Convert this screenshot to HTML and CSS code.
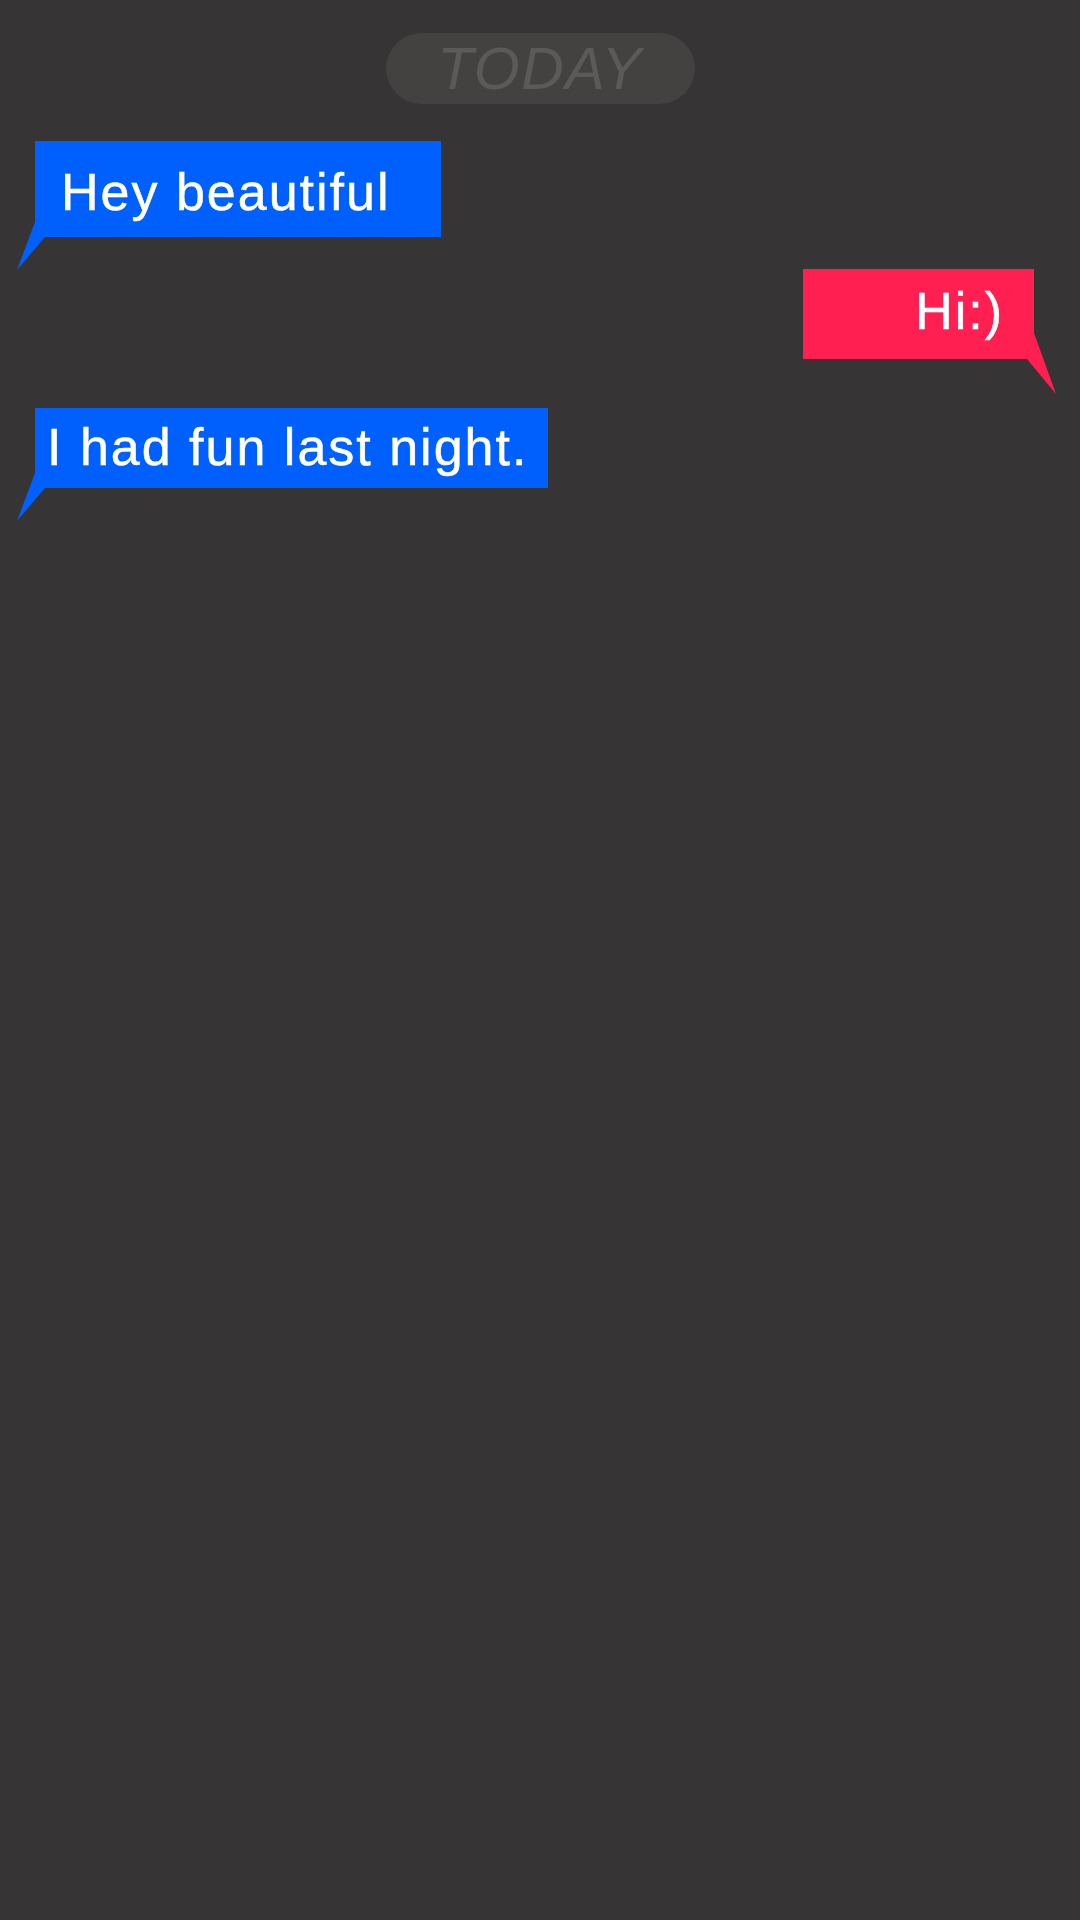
FILE: index.html
```html
<!DOCTYPE html>
<html lang="en">
<head>
<meta charset="utf-8">
<title>Chat</title>
<link rel="stylesheet" href="styles.css">
</head>
<body>
<main class="chat">
  <div class="day-pill">TODAY</div>
  <div class="messages">
    <div class="bubble incoming first">Hey beautiful</div>
    <div class="bubble outgoing second">Hi:)</div>
    <div class="bubble incoming third">I had fun last night.</div>
  </div>
</main>
</body>
</html>
```
FILE: styles.css
```css
html, body {
  margin: 0;
  padding: 0;
  background: #363435;
  height: 100%;
}
body {
  font-family: "Liberation Sans", Arial, Helvetica, sans-serif;
}
.chat {
  padding-top: 33px;
  min-height: 1920px;
  box-sizing: border-box;
}
.day-pill {
  width: 309px;
  height: 71px;
  margin: 0 auto;
  border-radius: 36px;
  background: #434241;
  color: #5b5a59;
  font-style: italic;
  font-size: 59px;
  line-height: 72px;
  letter-spacing: 1.5px;
  text-indent: 0;
  text-align: center;
}
.messages {
  display: flex;
  flex-direction: column;
  padding: 0 46px 0 35px;
}
.bubble {
  position: relative;
  box-sizing: border-box;
  color: #ffffff;
  font-size: 52px;
  line-height: 52px;
  letter-spacing: 2px;
  -webkit-text-stroke: 0.5px #ffffff;
  white-space: nowrap;
}
.bubble::before {
  content: "";
  position: absolute;
  background: inherit;
}
.incoming {
  align-self: flex-start;
  background: #0060fe;
}
.incoming::before {
  left: -18px;
  bottom: -33px;
  width: 28px;
  height: 48px;
  clip-path: polygon(18px 0, 0 48px, 28px 15px, 18px 15px);
}
.outgoing {
  align-self: flex-end;
  background: #ff1f50;
  text-align: right;
}
.outgoing::before {
  right: -22px;
  bottom: -35px;
  width: 29px;
  height: 61px;
  clip-path: polygon(7px 0, 29px 61px, 0 26px, 7px 26px);
}
.first {
  margin-top: 37px;
  width: 406px;
  height: 96px;
  padding: 25px 0 0 26px;
}
.second {
  margin-top: 32px;
  width: 231px;
  height: 90px;
  padding: 16px 30px 0 0;
}
.third {
  margin-top: 49px;
  width: 513px;
  height: 80px;
  padding: 13px 0 0 12px;
}
```
